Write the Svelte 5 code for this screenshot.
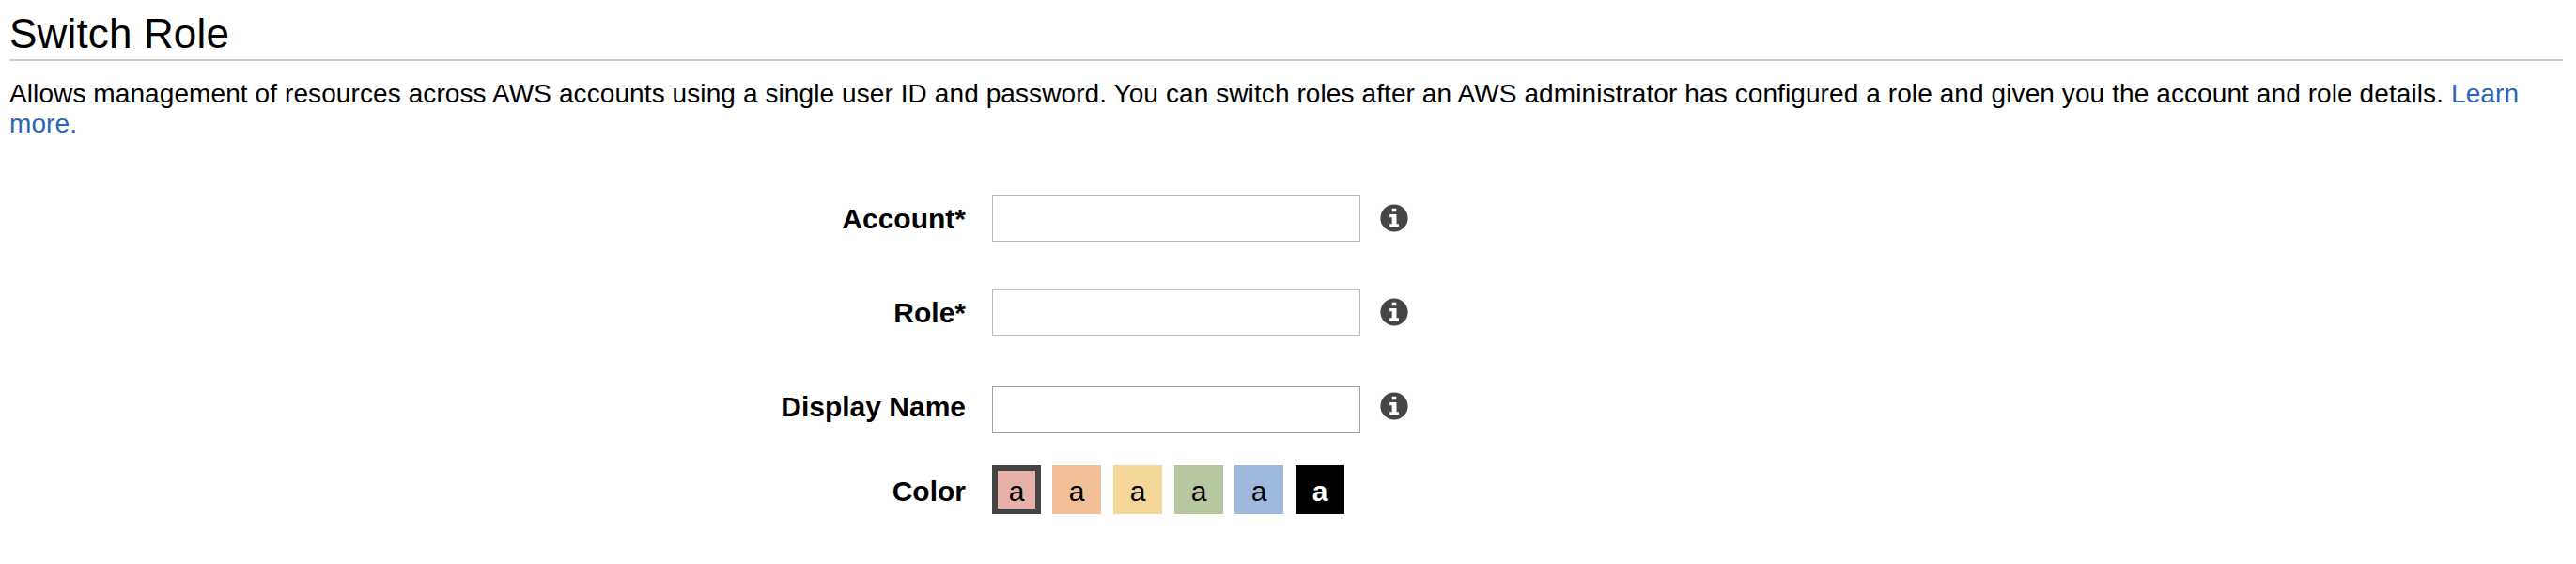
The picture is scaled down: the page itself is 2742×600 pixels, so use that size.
<script>
  const fields = [
    { id: 'account', label: 'Account*' },
    { id: 'role', label: 'Role*' },
    { id: 'display-name', label: 'Display Name' }
  ];
  const colors = ['red', 'orange', 'yellow', 'green', 'blue', 'black'];
  let selected = $state('red');
</script>

<main>
  <h1>Switch Role</h1>
  <p>
    <span class="copy">Allows management of resources across AWS accounts using a single user ID and password. You can switch roles after an AWS administrator has configured a role and given you the account and role details.</span>
    <a href="#learn">Learn<br />more.</a>
  </p>
  <form>
    {#each fields as field}
      <div class="row {field.id}">
        <label for={field.id}>{field.label}</label>
        <input id={field.id} type="text" />
        <svg class="info" viewBox="0 0 30 30" aria-hidden="true">
          <circle cx="15" cy="15" r="14.6" fill="#444645" />
          <path d="M12.7 4.7h4.6v3.6h-4.6zM10.2 11h7.3v10.3h2.4v3.4h-9.7v-3.4h2.5v-7h-2.5z" fill="#fff" />
        </svg>
      </div>
    {/each}
    <div class="row color">
      <span class="label">Color</span>
      <div class="swatches">
        {#each colors as color}
          <button type="button" class="swatch {color}" class:selected={selected === color} onclick={() => (selected = color)}>a</button>
        {/each}
      </div>
    </div>
  </form>
</main>

<style>
  :global(body) {
    background: #fff;
  }
  main {
    padding: 10px 14px 0 10px;
    color: #000;
    font-family: "Liberation Sans", Helvetica, Arial, sans-serif;
  }
  h1 {
    height: 53px;
    margin: 0;
    border-bottom: 2px solid #ccc;
    font-size: 44px;
    font-weight: 400;
    letter-spacing: 0.16px;
    line-height: 51px;
  }
  p {
    height: 64px;
    margin: 19px 0 0;
    font-size: 28px;
    letter-spacing: 0.094px;
    line-height: 32px;
    white-space: nowrap;
  }
  a {
    color: #2a65b8;
    text-decoration: none;
  }
  form {
    margin-top: 59px;
  }
  .row {
    display: flex;
    height: 50px;
    margin-bottom: 50px;
  }
  label,
  .label {
    width: 1018px;
    margin-right: 28px;
    font-size: 30px;
    font-weight: 700;
    line-height: 52px;
    text-align: right;
    white-space: nowrap;
  }
  .label {
    line-height: 55px;
  }
  input {
    box-sizing: border-box;
    width: 392px;
    height: 50px;
    margin: 0;
    padding: 0 8px;
    border: 1px solid #bbb;
    border-radius: 0;
    outline: none;
    background: #fff;
    font: inherit;
    font-size: 28px;
  }
  .info {
    width: 30px;
    height: 30px;
    margin: 10px 0 0 21px;
  }
  .display-name {
    margin-bottom: 38px;
  }
  .display-name input {
    margin-top: 4px;
    border-color: #a0a0a0;
  }
  .color {
    height: 52px;
    margin: 0;
  }
  .swatches {
    display: grid;
    grid-template-columns: 64px 65px 65px 64px 65px 52px;
  }
  .swatch {
    width: 52px;
    height: 52px;
    margin: 0;
    padding: 3px 0 0;
    border: 0;
    color: #000;
    font-family: inherit;
    font-size: 30px;
    line-height: 49px;
    text-align: center;
  }
  .selected {
    border: 6px solid #444;
    line-height: 37px;
  }
  .red { background: #e7b1aa; }
  .orange { background: #f2bf98; }
  .yellow { background: #f4d799; }
  .green { background: #b8c89e; }
  .blue { background: #9fb9de; }
  .black { background: #000; color: #fff; font-weight: 700; }
</style>
